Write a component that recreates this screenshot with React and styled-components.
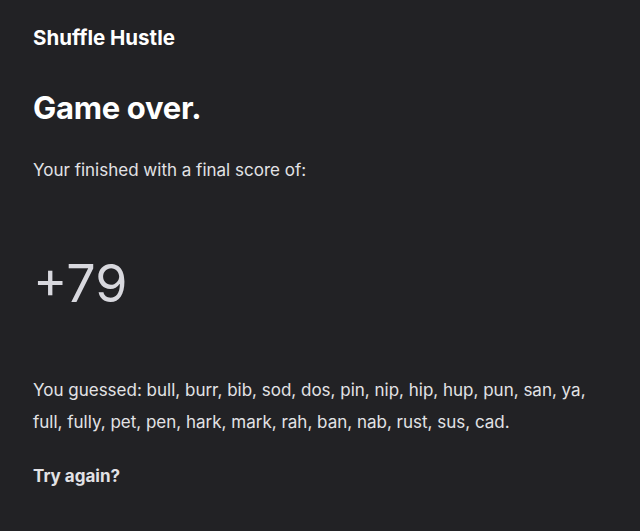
import React from "react";
import styled, { createGlobalStyle } from "styled-components";

const Global = createGlobalStyle`
  html, body { margin: 0; padding: 0; background: #222225; }
  body { font-family: Inter, "Noto Sans", sans-serif; -webkit-font-smoothing: antialiased; }
`;

const Page = styled.main`
  box-sizing: border-box;
  width: 640px;
  min-height: 531px;
  padding: 24px 33px 0;
  display: flex;
  flex-direction: column;
  color: #e2e2e6;
`;

const Brand = styled.h1`
  margin: 0;
  font-size: 20.5px;
  font-weight: 700;
  line-height: 28px;
  color: #ffffff;
`;

const Heading = styled.h2`
  margin: 38px 0 0;
  font-size: 31px;
  font-weight: 700;
  line-height: 36px;
  letter-spacing: -0.3px;
  color: #ffffff;
`;

const Text = styled.p`
  margin: ${(p) => p.$top || 0}px 0 0;
  font-size: 17px;
  line-height: 32px;
  font-weight: ${(p) => (p.$bold ? 700 : 400)};
  color: #e2e2e6;
`;

const Score = styled.div`
  margin: 66px 0 0;
  font-size: 52px;
  font-weight: 400;
  line-height: 64px;
  color: #d8d8de;
`;

const words = "bull, burr, bib, sod, dos, pin, nip, hip, hup, pun, san, ya, full, fully, pet, pen, hark, mark, rah, ban, nab, rust, sus, cad";

export default function App() {
  return (
    <>
      <Global />
      <Page>
        <Brand>Shuffle Hustle</Brand>
        <Heading>Game over.</Heading>
        <Text $top={28}>Your finished with a final score of:</Text>
        <Score>+79</Score>
        <Text $top={58}>You guessed: {words}.</Text>
        <Text $top={22} $bold>Try again?</Text>
      </Page>
    </>
  );
}
